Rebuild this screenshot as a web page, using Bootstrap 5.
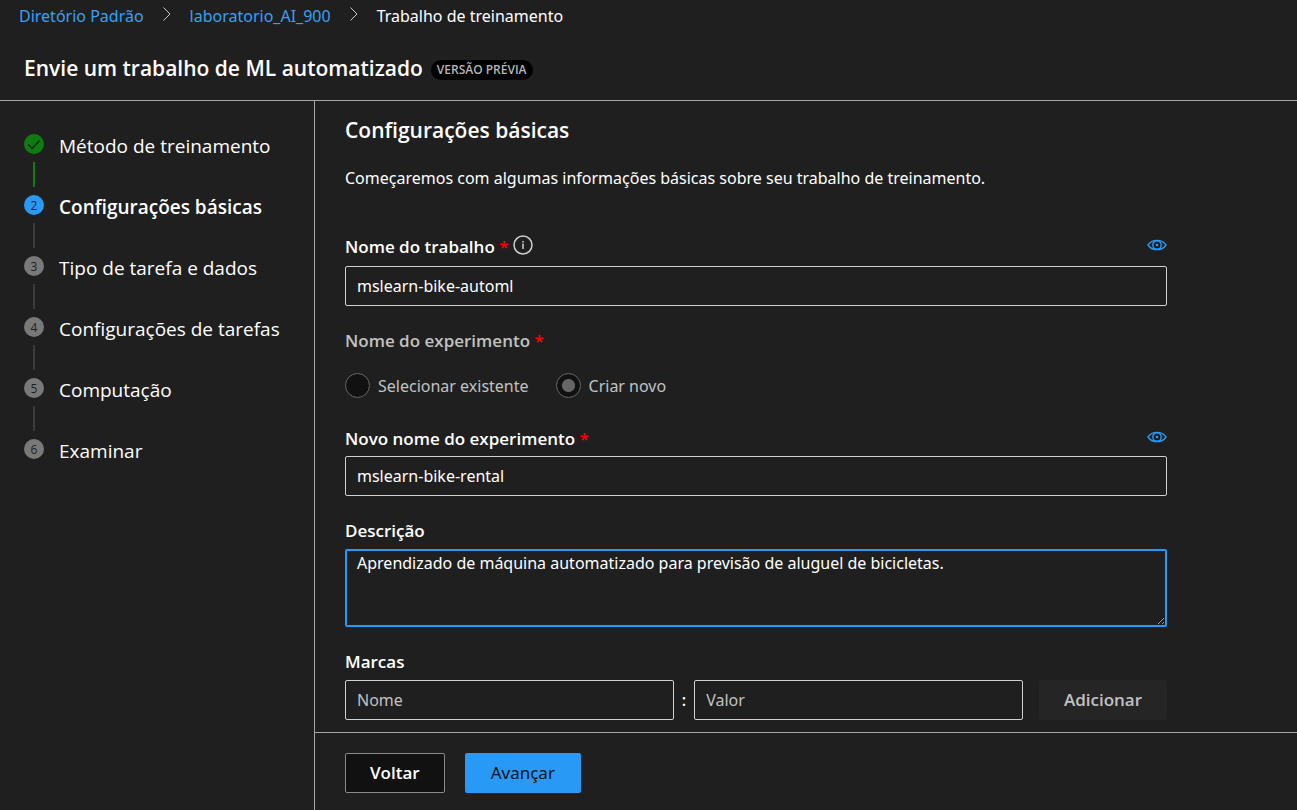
<!DOCTYPE html>
<html lang="pt-BR" data-bs-theme="dark">
<head>
<meta charset="utf-8">
<meta name="viewport" content="width=device-width, initial-scale=1">
<title>Envie um trabalho de ML automatizado</title>
<link href="https://cdn.jsdelivr.net/npm/bootstrap@5.3.0/dist/css/bootstrap.min.css" rel="stylesheet">
<style>
  body { --accent: #2899f5; --line: #a6a6a6; background: #1f1f1f; color: #fff; font-family: "Noto Sans", "Open Sans", sans-serif; font-size: 16px; line-height: 24px; }
  .fw-semibold, .steps-pane { font-family: "Open Sans", "Noto Sans", sans-serif; }
  .crumbs { padding: 4px 19px 0; }
  .crumbs a { color: #3aa0f3; }
  .crumbs li { display: flex; align-items: center; }
  .crumbs svg { margin: 0 18px 4px; }
  .page-title { font-size: 21px; line-height: 32px; }
  .title-row { padding: 24px 24px 16px; border-bottom: 1px solid var(--line); }
  .preview-tag { background: #000; color: #b5b5b5; font-size: 12px; line-height: 20px; padding: 0 6px; }
  .steps-pane { width: 315px; padding: 33px 24px; border-right: 1px solid var(--line); }
  .step { gap: 15px; font-size: 19px; }
  .step-dot { width: 20px; height: 20px; font-size: 12px; line-height: 21px; background: #797979; color: #1f1f1f; }
  .step-dot.done { background: #107c10; }
  .step-dot.current { background: var(--accent); }
  .step-line { width: 2px; height: 25px; margin: 8px auto; background: #3b3b3b; }
  .step-line.done { background: #107c10; }
  .step-link { color: #fff; height: 24px; }
  .form-pane { padding: 13px 30px 12px; }
  .form-body { max-width: 822px; }
  .section-title { font-size: 21px; line-height: 32px; margin-bottom: 20px; }
  .intro { margin-bottom: 44px; }
  .label-row { height: 26px; margin-bottom: 6px; font-size: 17px; }
  .label-tight { margin-bottom: 4px; }
  .req { color: #f00; }
  .dim { color: #c2c2c2; }
  .field { height: 40px; background: #1f1f1f; color: #fff; border: 1px solid #d0d0d0; border-radius: 2px; font-size: 16px; padding: 0 11px; margin-bottom: 23px; min-width: 0; }
  .field::placeholder { color: #c2c2c2; opacity: 1; }
  .field:focus { background: #1f1f1f; color: #fff; box-shadow: none; border-color: var(--accent); }
  textarea.field { height: 78px; min-height: 78px; border: 2px solid var(--accent); padding: 0 10px; line-height: 24px; resize: vertical; }
  .choices { margin-bottom: 28px; }
  .choices legend { font-size: 17px; line-height: 24px; margin-bottom: 20px; }
  .picks { gap: 27px; }
  .pick { gap: 8px; }
  .pick input { appearance: none; width: 25px; height: 25px; margin: 0; border: 1px solid #666; border-radius: 50%; background: #111; }
  .pick input:checked { background: radial-gradient(circle, #666 6px, #111 7px); }
  .act { height: 40px; border-radius: 2px; font-size: 17px; padding: 0 25px; line-height: 24px; }
  .act-add, .act-add:disabled { background: #252525; color: #c2c2c2; border: 0; opacity: 1; }
  .act-back { background: #111; color: #fff; border: 1px solid #8a8a8a; padding: 0 24px; }
  .act-next { background: var(--accent); color: #111; border: 0; padding: 0 26px; }
  .foot { gap: 20px; padding: 20px 30px 17px; border-top: 1px solid var(--line); }
  .eye { color: var(--accent); line-height: 0; }
</style>
</head>
<body class="vh-100 d-flex flex-column overflow-hidden">
<header>
  <nav aria-label="Trilha">
    <ol class="crumbs list-unstyled d-flex mb-0">
      <li><a href="#" class="text-decoration-none">Diretório Padrão</a></li>
      <li><svg width="10" height="14" viewBox="0 0 10 14" fill="none" stroke="#c8c8c8" aria-hidden="true"><path d="M1.500 .5L8 7l-6.500 6.500"/></svg><a href="#" class="text-decoration-none">laboratorio_AI_900</a></li>
      <li aria-current="page"><svg width="10" height="14" viewBox="0 0 10 14" fill="none" stroke="#c8c8c8" aria-hidden="true"><path d="M1.500 .5L8 7l-6.500 6.500"/></svg>Trabalho de treinamento</li>
    </ol>
  </nav>
  <div class="title-row d-flex align-items-center">
    <h1 class="page-title fw-semibold mb-0">Envie um trabalho de ML automatizado</h1>
    <span class="preview-tag rounded-pill fw-semibold ms-2 mt-1">VERSÃO PRÉVIA</span>
  </div>
</header>
<div class="d-flex flex-grow-1 overflow-hidden">
  <aside class="steps-pane flex-shrink-0">
    <ol class="list-unstyled mb-0">
      <li class="step d-flex"><div><div class="step-dot done rounded-circle"><svg class="d-block" width="20" height="20" viewBox="0 0 20 20" fill="none" stroke="#0a2a0a" stroke-width="1.5" aria-hidden="true"><path d="M4.200 10.500l4 4 7.600-8"/></svg></div><div class="step-line done"></div></div><a href="#" class="step-link text-decoration-none">Método de treinamento</a></li>
      <li class="step d-flex"><div><div class="step-dot current rounded-circle text-center">2</div><div class="step-line"></div></div><a href="#" class="step-link text-decoration-none fw-semibold" aria-current="step">Configurações básicas</a></li>
      <li class="step d-flex"><div><div class="step-dot rounded-circle text-center">3</div><div class="step-line"></div></div><a href="#" class="step-link text-decoration-none">Tipo de tarefa e dados</a></li>
      <li class="step d-flex"><div><div class="step-dot rounded-circle text-center">4</div><div class="step-line"></div></div><a href="#" class="step-link text-decoration-none">Configurações de tarefas</a></li>
      <li class="step d-flex"><div><div class="step-dot rounded-circle text-center">5</div><div class="step-line"></div></div><a href="#" class="step-link text-decoration-none">Computação</a></li>
      <li class="step d-flex"><div><div class="step-dot rounded-circle text-center">6</div></div><a href="#" class="step-link text-decoration-none">Examinar</a></li>
    </ol>
  </aside>
  <form class="flex-grow-1 d-flex flex-column overflow-hidden" onsubmit="return false">
    <main class="form-pane flex-grow-1 overflow-hidden">
      <div class="form-body">
        <h2 class="section-title fw-semibold">Configurações básicas</h2>
        <p class="intro">Começaremos com algumas informações básicas sobre seu trabalho de treinamento.</p>

        <div class="label-row d-flex align-items-center">
          <label for="job" class="fw-semibold">Nome do trabalho <span class="req">*</span></label>
          <svg class="ms-1 mb-1" width="20" height="20" viewBox="0 0 20 20" fill="none" stroke="#d0d0d0" stroke-width="1.5" role="img" aria-label="Informações"><circle cx="10" cy="10" r="9"/><path d="M10 8.500v5.500M10 6v1.500"/></svg>
          <a href="#" class="eye ms-auto mb-1" aria-label="Mostrar nome do trabalho"><svg width="20" height="12" viewBox="0 0 20 12" fill="none" stroke="currentColor" stroke-width="1.400"><path d="M1 6C5-.2 15-.2 19 6 15 12.200 5 12.200 1 6z"/><circle cx="10" cy="6" r="4.200"/><circle cx="10" cy="6" r="1.300" fill="currentColor" stroke="none"/></svg></a>
        </div>
        <input id="job" type="text" class="form-control field" value="mslearn-bike-automl">

        <fieldset class="choices dim">
          <legend class="fw-semibold">Nome do experimento <span class="req">*</span></legend>
          <div class="picks d-flex">
            <label class="pick d-flex align-items-center"><input type="radio" name="mode" disabled>Selecionar existente</label>
            <label class="pick d-flex align-items-center"><input type="radio" name="mode" checked disabled>Criar novo</label>
          </div>
        </fieldset>

        <div class="label-row label-tight d-flex align-items-center">
          <label for="exp" class="fw-semibold">Novo nome do experimento <span class="req">*</span></label>
          <a href="#" class="eye ms-auto mb-1" aria-label="Mostrar nome do experimento"><svg width="20" height="12" viewBox="0 0 20 12" fill="none" stroke="currentColor" stroke-width="1.400"><path d="M1 6C5-.2 15-.2 19 6 15 12.200 5 12.200 1 6z"/><circle cx="10" cy="6" r="4.200"/><circle cx="10" cy="6" r="1.300" fill="currentColor" stroke="none"/></svg></a>
        </div>
        <input id="exp" type="text" class="form-control field" value="mslearn-bike-rental">

        <div class="label-row label-tight"><label for="desc" class="fw-semibold">Descrição</label></div>
        <textarea id="desc" class="form-control field">Aprendizado de máquina automatizado para previsão de aluguel de bicicletas.</textarea>

        <div class="label-row label-tight"><label for="tag" class="fw-semibold">Marcas</label></div>
        <div class="d-flex align-items-center">
          <input id="tag" type="text" class="form-control field flex-fill w-25 mb-0" placeholder="Nome">
          <span class="px-2 fw-semibold">:</span>
          <input type="text" class="form-control field flex-fill w-25 mb-0" placeholder="Valor" aria-label="Valor">
          <button type="button" class="btn act act-add fw-semibold ms-3" disabled>Adicionar</button>
        </div>
      </div>
    </main>
    <footer class="foot d-flex">
      <button type="button" class="btn act act-back fw-semibold">Voltar</button>
      <button type="submit" class="btn act act-next">Avançar</button>
    </footer>
  </form>
</div>
<script src="https://cdn.jsdelivr.net/npm/bootstrap@5.3.0/dist/js/bootstrap.bundle.min.js"></script>
</body>
</html>
